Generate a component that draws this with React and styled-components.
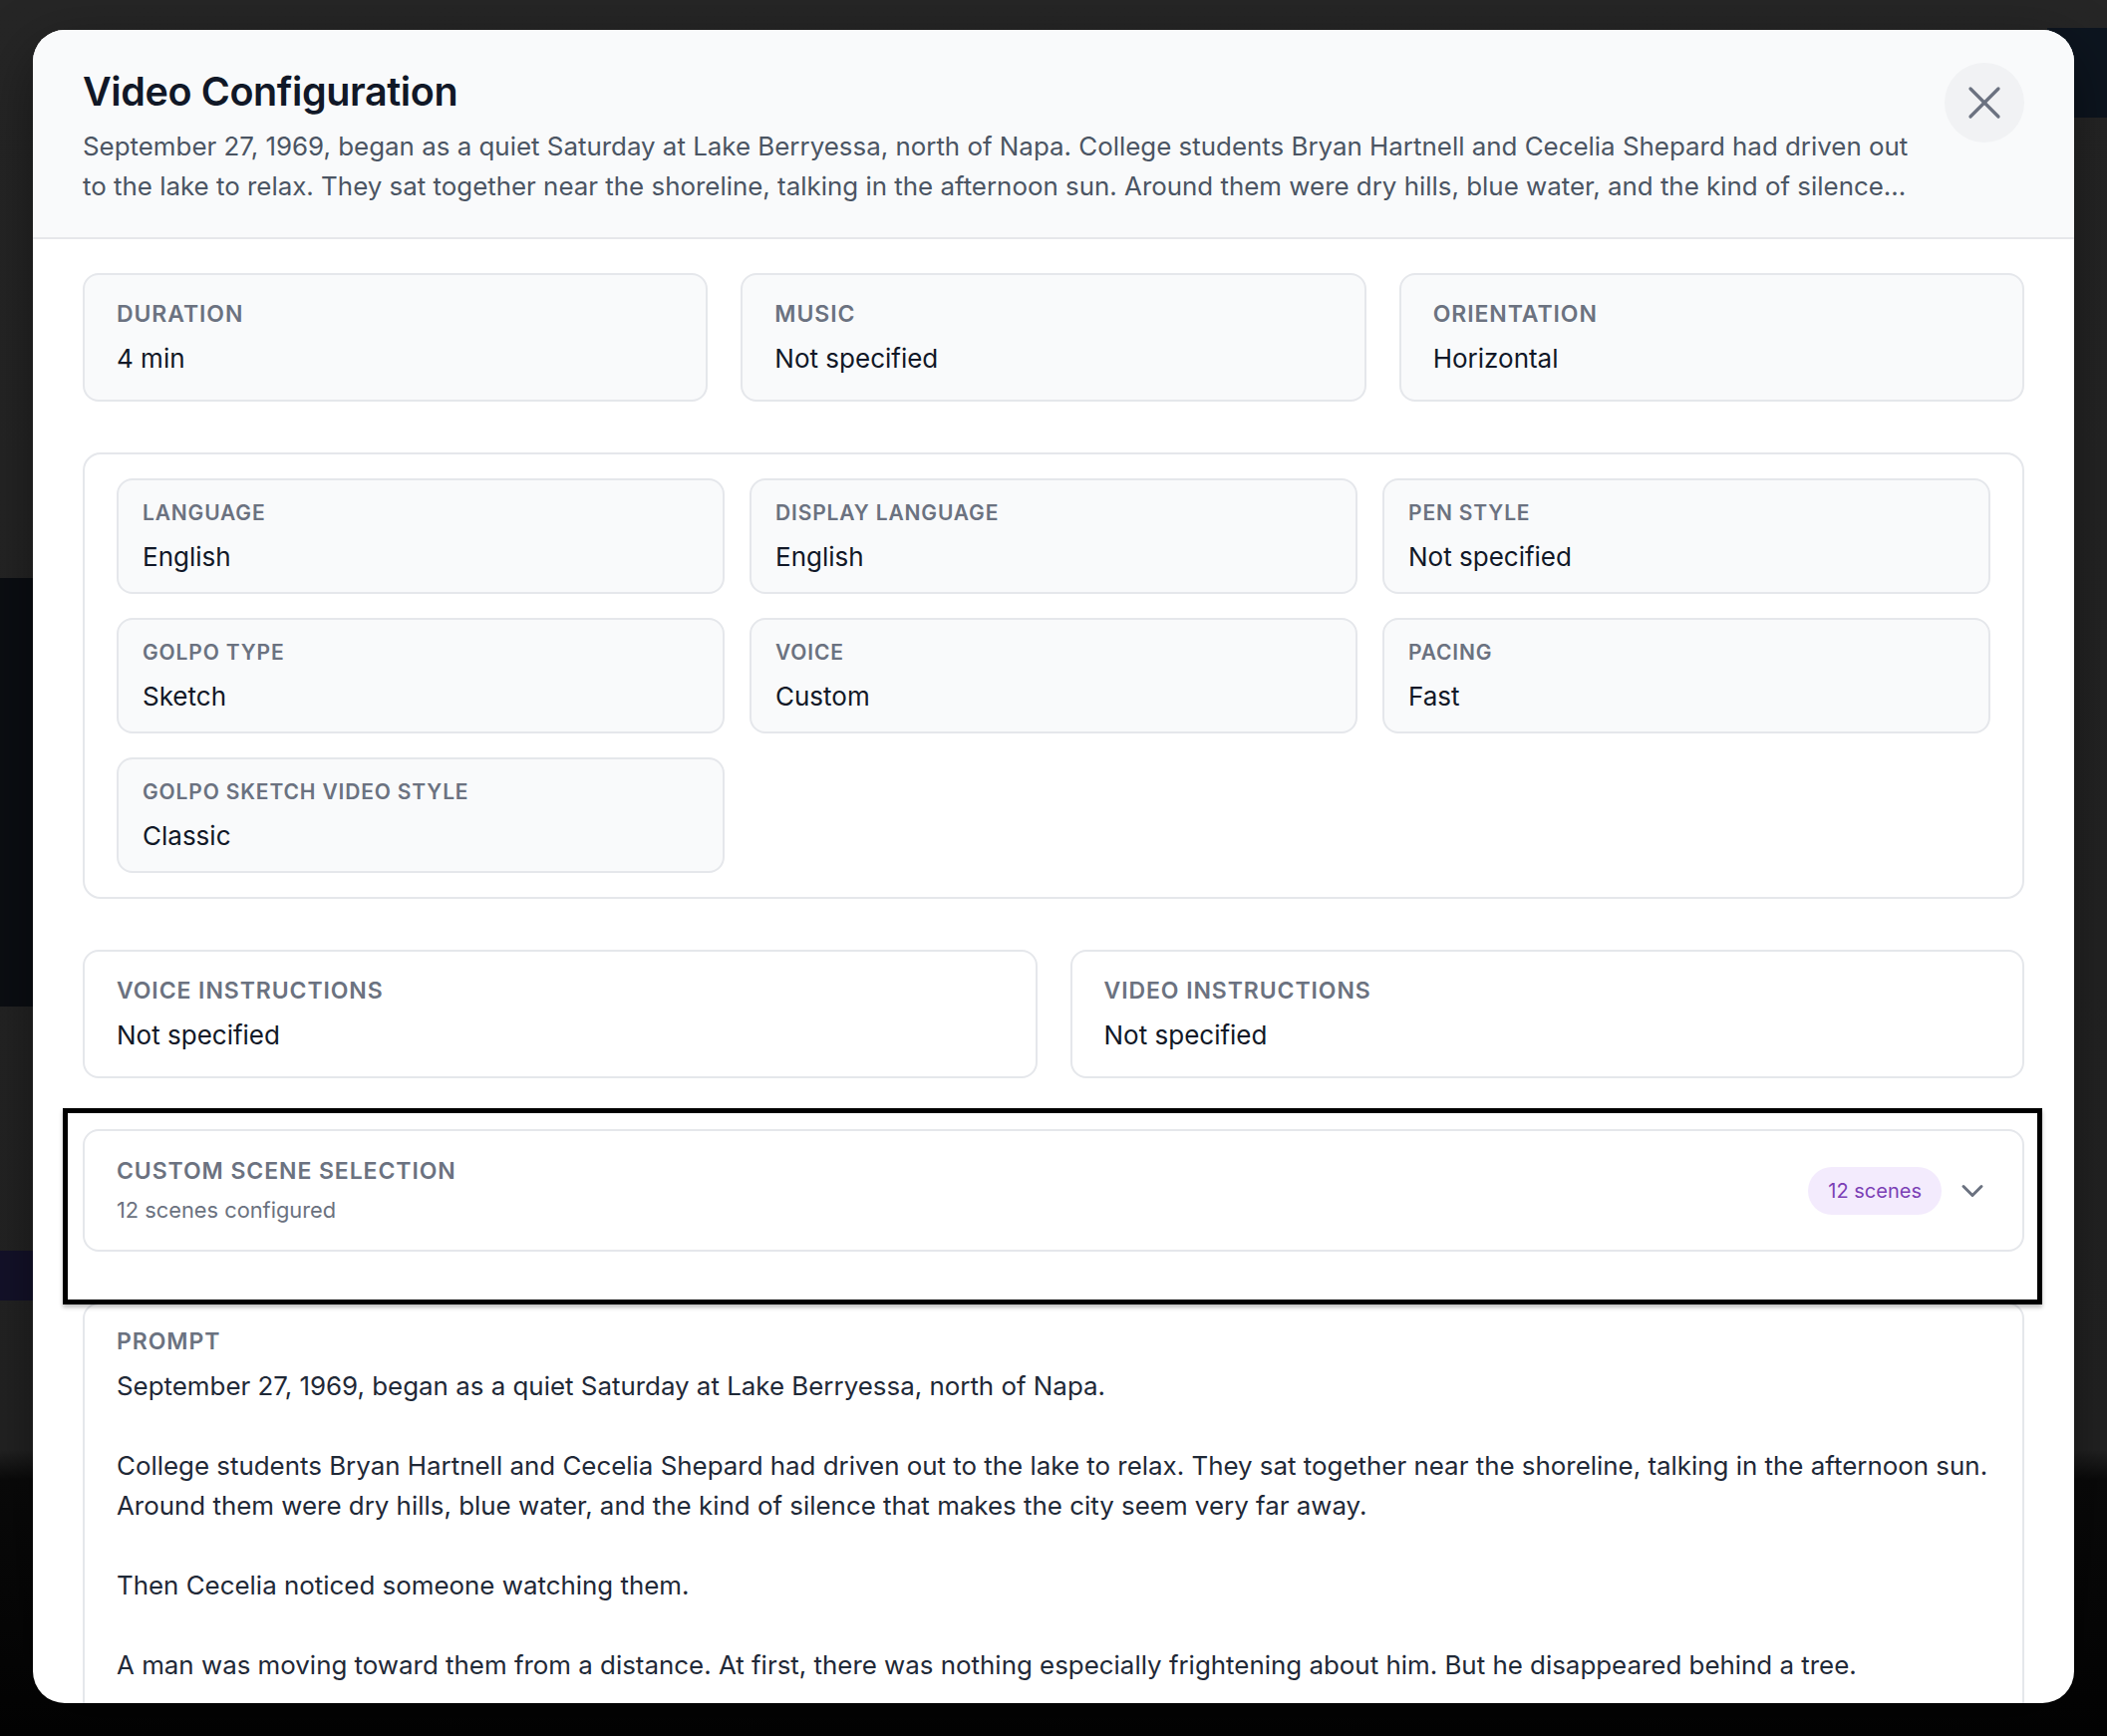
import styled, { createGlobalStyle } from 'styled-components';
import { X, ChevronDown } from 'lucide-react';

const GlobalStyle = createGlobalStyle`
  html, body {
    margin: 0;
    padding: 0;
    background: #050505;
  }
  * {
    box-sizing: border-box;
  }
  body {
    font-family: Inter, "Noto Sans", "Liberation Sans", sans-serif;
    -webkit-font-smoothing: antialiased;
  }
`;

const Backdrop = styled.div`
  width: 100vw;
  height: 100vh;
  display: flex;
  justify-content: center;
  align-items: flex-start;
  padding-top: 30px;
  overflow: hidden;
  background:
    linear-gradient(#0b0e13, #0b0e13) 0 580px / 40px 430px no-repeat,
    linear-gradient(#14122a, #14122a) 0 1255px / 40px 50px no-repeat,
    linear-gradient(#0d151f, #0d151f) right 0 top 28px / 60px 90px no-repeat,
    linear-gradient(to bottom, #262626 0, #232323 1455px, #0a0a0a 1485px, #030303 100%);
`;

const Modal = styled.div`
  width: 2048px;
  height: 1679px;
  background: #ffffff;
  border-radius: 32px;
  overflow: hidden;
  display: flex;
  flex-direction: column;
  box-shadow: 0 20px 60px rgba(0, 0, 0, 0.45);
`;

const Header = styled.header`
  display: flex;
  align-items: flex-start;
  gap: 24px;
  padding: 33px 50px 31px;
  background: #f9fafb;
  border-bottom: 2px solid #e6e7ea;
  flex-shrink: 0;
`;

const HeaderText = styled.div`
  flex: 1;
  min-width: 0;
  padding-top: 7px;
`;

const Title = styled.h2`
  margin: 0;
  font-size: 39.5px;
  line-height: 44px;
  font-weight: 600;
  color: #111827;
  letter-spacing: -0.01em;
`;

const Description = styled.p`
  margin: 13px 0 0;
  font-size: 25.9px;
  line-height: 40px;
  color: #4b5563;
`;

const CloseButton = styled.button`
  width: 80px;
  height: 80px;
  flex-shrink: 0;
  border: none;
  border-radius: 50%;
  background: #f1f2f4;
  color: #6b7280;
  display: flex;
  align-items: center;
  justify-content: center;
  padding: 0;
  cursor: pointer;
`;

const Body = styled.div`
  flex: 1;
  min-height: 0;
  overflow: hidden;
  padding: 34px 50px;
  display: flex;
  flex-direction: column;
  gap: 51px;

  & > * {
    flex-shrink: 0;
  }
`;

const Grid = styled.div`
  display: grid;
  grid-template-columns: repeat(${(p) => p.$cols}, 1fr);
  gap: ${(p) => p.$gap};
`;

const Card = styled.div`
  border: 2px solid #e5e7eb;
  border-radius: 16px;
  background: ${(p) => (p.$muted ? '#f9fafb' : '#ffffff')};
  padding: ${(p) => (p.$compact ? '19px 24px 17px' : '24px 32px 23px')};
  display: flex;
  flex-direction: column;
  gap: 12px;
`;

const Label = styled.div`
  font-size: ${(p) => (p.$compact ? '21px' : '23px')};
  line-height: ${(p) => (p.$compact ? '28px' : '30px')};
  font-weight: 600;
  letter-spacing: 0.04em;
  text-transform: uppercase;
  color: #6b7280;
`;

const Value = styled.div`
  font-size: 26px;
  line-height: 36px;
  color: #111827;
`;

const Section = styled.section`
  border: 2px solid #e5e7eb;
  border-radius: 18px;
  padding: 24px 32px;
`;

const SceneCard = styled.div`
  position: relative;
  border: 2px solid #e5e7eb;
  border-radius: 16px;
  padding: 25px 32px 25px;
  display: flex;
  align-items: center;
  justify-content: space-between;

  &::after {
    content: '';
    position: absolute;
    top: -23px;
    left: -22px;
    right: -20px;
    bottom: -55px;
    border: 5px solid #000000;
    box-shadow: 0 3px 4px rgba(0, 0, 0, 0.25);
    pointer-events: none;
  }
`;

const SceneInfo = styled.div`
  display: flex;
  flex-direction: column;
  gap: 9px;
`;

const SubText = styled.div`
  font-size: 21.8px;
  line-height: 30px;
  color: #6b7280;
`;

const SceneActions = styled.div`
  display: flex;
  align-items: center;
  gap: 13px;
  color: #6b7280;
`;

const Badge = styled.span`
  height: 48px;
  padding: 0 20px;
  border-radius: 999px;
  background: #f3ebfd;
  color: #7b3fb5;
  font-size: 20px;
  display: inline-flex;
  align-items: center;
`;

const PromptCard = styled.div`
  border: 2px solid #e5e7eb;
  border-radius: 16px;
  padding: 22px 24px 32px 32px;
  display: flex;
  flex-direction: column;
  gap: 10px;
`;

const PromptText = styled.div`
  font-size: 25.9px;
  line-height: 40px;
  color: #1f2937;
  white-space: pre-line;
`;

const summary =
  'September 27, 1969, began as a quiet Saturday at Lake Berryessa, north of Napa. College students Bryan Hartnell and Cecelia Shepard had driven out to the lake to relax. They sat together near the shoreline, talking in the afternoon sun. Around them were dry hills, blue water, and the kind of silence...';

const prompt = `September 27, 1969, began as a quiet Saturday at Lake Berryessa, north of Napa.

College students Bryan Hartnell and Cecelia Shepard had driven out to the lake to relax. They sat together near the shoreline, talking in the afternoon sun. Around them were dry hills, blue water, and the kind of silence that makes the city seem very far away.

Then Cecelia noticed someone watching them.

A man was moving toward them from a distance. At first, there was nothing especially frightening about him. But he disappeared behind a tree.`;

const overview = [
  ['Duration', '4 min'],
  ['Music', 'Not specified'],
  ['Orientation', 'Horizontal'],
];

const settings = [
  ['Language', 'English'],
  ['Display Language', 'English'],
  ['Pen Style', 'Not specified'],
  ['Golpo Type', 'Sketch'],
  ['Voice', 'Custom'],
  ['Pacing', 'Fast'],
  ['Golpo Sketch Video Style', 'Classic'],
];

const instructions = [
  ['Voice Instructions', 'Not specified'],
  ['Video Instructions', 'Not specified'],
];

export default function App() {
  return (
    <>
      <GlobalStyle />
      <Backdrop>
        <Modal>
          <Header>
            <HeaderText>
              <Title>Video Configuration</Title>
              <Description>{summary}</Description>
            </HeaderText>
            <CloseButton aria-label="Close">
              <X size={56} strokeWidth={1.4} />
            </CloseButton>
          </Header>

          <Body>
            <Grid $cols={3} $gap="33px">
              {overview.map(([label, value]) => (
                <Card key={label} $muted>
                  <Label>{label}</Label>
                  <Value>{value}</Value>
                </Card>
              ))}
            </Grid>

            <Section>
              <Grid $cols={3} $gap="24px 25px">
                {settings.map(([label, value]) => (
                  <Card key={label} $muted $compact>
                    <Label $compact>{label}</Label>
                    <Value>{value}</Value>
                  </Card>
                ))}
              </Grid>
            </Section>

            <Grid $cols={2} $gap="33px">
              {instructions.map(([label, value]) => (
                <Card key={label}>
                  <Label>{label}</Label>
                  <Value>{value}</Value>
                </Card>
              ))}
            </Grid>

            <SceneCard>
              <SceneInfo>
                <Label>Custom Scene Selection</Label>
                <SubText>12 scenes configured</SubText>
              </SceneInfo>
              <SceneActions>
                <Badge>12 scenes</Badge>
                <ChevronDown size={36} strokeWidth={2} />
              </SceneActions>
            </SceneCard>

            <PromptCard>
              <Label>Prompt</Label>
              <PromptText>{prompt}</PromptText>
            </PromptCard>
          </Body>
        </Modal>
      </Backdrop>
    </>
  );
}
